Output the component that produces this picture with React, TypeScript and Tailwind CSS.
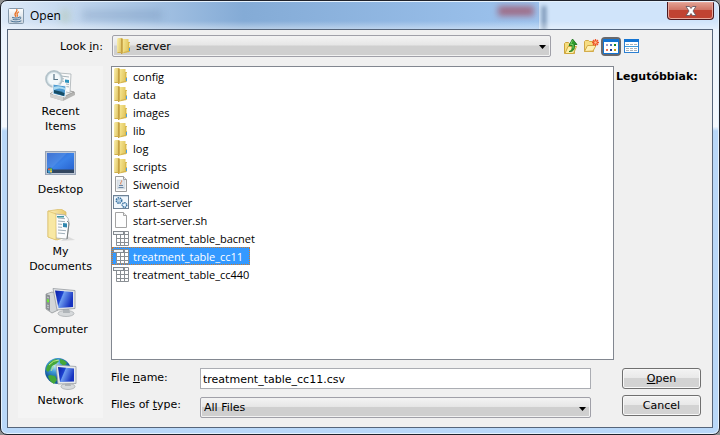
import React, { useState } from "react";

const uiFont = "font-['DejaVu_Sans',Verdana,sans-serif]";
const listFont = "font-['Open_Sans','Noto_Sans',sans-serif]";

function FolderIcon() {
  return (
    <svg width="16" height="16" viewBox="0 0 16 16" className="shrink-0" aria-hidden="true">
      <defs>
        <linearGradient id="fold-a" x2="1" y2=".3">
          <stop offset="0" stopColor="#faf0ae" />
          <stop offset="1" stopColor="#dfc463" />
        </linearGradient>
        <linearGradient id="fold-b" x2="1">
          <stop offset="0" stopColor="#bf9a3d" />
          <stop offset="1" stopColor="#e2c565" />
        </linearGradient>
        <linearGradient id="fold-c" x2="1" y2=".3">
          <stop offset="0" stopColor="#f5e591" />
          <stop offset="1" stopColor="#e3c860" />
        </linearGradient>
      </defs>
      <path d="M1 1l1-1h4v15H2l-1-1z" fill="url(#fold-a)" />
      <path d="M6 0l2 2v12l-2 2H5V1z" fill="url(#fold-b)" />
      <path d="M7 1h5.500v13L7 15.500z" fill="url(#fold-c)" />
      <path d="M12 4h2v9.500l-2 1z" fill="#d9b951" />
      <path d="M13.500 5v4" stroke="#f2e5a2" />
      <path d="M13.500 10v3" stroke="#4ba0e0" />
      <path d="M1.500 14.500h4M7.500 14.500l5-1" stroke="#cfae4b" />
    </svg>
  );
}

function JavaCup() {
  return (
    <g fill="none" strokeLinecap="round">
      <path d="M8.800 1.500c1.500 2.500-4 3.500-1 7M10.500 4c-2.500 1.500-1.500 2-1 4" stroke="#e8742a" strokeWidth="1.300" />
      <path d="M4.500 9.500c2 .8 5 .8 6.500 0M5 11.300c2 .7 4 .7 5.500 0M3 13c2.500 1.300 7.500 1.300 10 0M11.500 9c2-.5 2 1.800 0 2.300" stroke="#466f93" />
    </g>
  );
}

function JavaIcon() {
  return (
    <svg width="16" height="16" viewBox="0 0 16 16" className="shrink-0" aria-hidden="true">
      <defs>
        <linearGradient id="java-bg" x2="0" y2="1">
          <stop offset="0" stopColor="#fff" />
          <stop offset="1" stopColor="#c9d4de" />
        </linearGradient>
      </defs>
      <rect x=".5" y=".5" width="15" height="15" rx="1" fill="url(#java-bg)" stroke="#8599ab" />
      <JavaCup />
    </svg>
  );
}

function JarIcon() {
  return (
    <svg width="16" height="16" viewBox="0 0 16 16" className="shrink-0" aria-hidden="true">
      <path d="M2.500.5h8l3 3v12h-11z" fill="#fcfcfc" stroke="#9b9b9b" />
      <path d="M10.500.5v3h3" fill="#e8e8e8" stroke="#9b9b9b" />
      <rect x="4" y="4" width="8" height="9" fill="#dde3e9" stroke="#c3cbd2" strokeWidth=".5" />
      <path d="M8.500 4.500c1 1.500-2 2-.5 4" stroke="#e27a48" fill="none" />
      <path d="M6 9.500h4M5.500 11.500h5" stroke="#6886a5" />
    </svg>
  );
}

function BatchIcon() {
  return (
    <svg width="16" height="16" viewBox="0 0 16 16" className="shrink-0" aria-hidden="true">
      <rect x=".5" y="1.500" width="15" height="13" fill="#f1f7fc" stroke="#6e8296" />
      <path d="M1 2.500h14" stroke="#c8d8e6" />
      <circle cx="6" cy="6.500" r="2.700" fill="#cfe4f5" stroke="#39719f" strokeWidth="1.600" strokeDasharray="1.500 .7" />
      <circle cx="6" cy="6.500" r="1" fill="#fff" stroke="#5d8fb8" strokeWidth=".6" />
      <circle cx="11.500" cy="11" r="2.300" fill="#d9eaf8" stroke="#39719f" strokeWidth="1.400" strokeDasharray="1.300 .6" />
      <circle cx="11.500" cy="11" r=".8" fill="#fff" />
    </svg>
  );
}

function BlankIcon() {
  return (
    <svg width="16" height="16" viewBox="0 0 16 16" className="shrink-0" aria-hidden="true">
      <path d="M2.500.5h8l3 3v12h-11z" fill="#fdfdfd" stroke="#a3a3a3" />
      <path d="M10.500.5v3h3" fill="#ececec" stroke="#a3a3a3" />
    </svg>
  );
}

function SheetIcon() {
  return (
    <svg width="16" height="16" viewBox="0 0 16 16" className="shrink-0" aria-hidden="true">
      <path d="M3 1h12v14.500H3z" fill="#fff" />
      <path d="M3.500 5v10.500h12V1.500h-4M3.500 8.500h12M3.500 12.500h12M7.500 5v10.500M11.500 1v14.500M11 4.500h4.500" fill="none" stroke="#8a8f94" />
      <rect x=".5" y="1.500" width="10" height="3" fill="#f3f5f7" stroke="#83898f" />
    </svg>
  );
}

function UpFolderIcon() {
  return (
    <svg width="16" height="17" viewBox="0 0 16 17" aria-hidden="true">
      <path d="M1.500 15.500V5.500l1-1h3l1 1h5v10z" fill="#f6dd80" stroke="#cda43c" />
      <path d="M2 15.500l3-7h8.500l-3 7z" fill="#fdf0a8" stroke="#d1a93f" />
      <path d="M6 13.500c3-.5 3.300-3 3-6H6L9.500 1l4.500 5.500h-2.500c.5 5-1.500 7.500-5.500 7z" fill="#2e9a2e" stroke="#167016" strokeWidth=".8" />
      <path d="M9.500 2.500l-2 4h2.500v4" stroke="#75cc61" fill="none" />
    </svg>
  );
}

function NewFolderIcon() {
  return (
    <svg width="16" height="16" viewBox="0 0 16 16" aria-hidden="true">
      <path d="M1.500 13.500v-10l1-1h3l1 1h4v10z" fill="#f7dd82" stroke="#d0a745" />
      <path d="M1.500 13.500l3-6h8.500l-3 5.500z" fill="#fff1b4" stroke="#d3ab48" />
      <path d="M12.500 1v7M9 4.500h7M10 2l5 5M15 2l-5 5" stroke="#ef5327" strokeWidth="1.300" />
      <circle cx="12.500" cy="4.500" r="1.200" fill="#ffc38a" />
    </svg>
  );
}

function ListViewIcon() {
  return (
    <svg width="16" height="15" viewBox="0 0 16 15" aria-hidden="true">
      <rect x=".5" y=".5" width="15" height="14" fill="#fff" stroke="#1474d2" />
      <path d="M0 1.500h16" stroke="#1474d2" strokeWidth="3" />
      <path d="M3 5h2v2H3z" fill="#a79ccb" /><path d="M7 5h2v2H7z" fill="#4b72c4" /><path d="M11 5h2v2h-2z" fill="#118a22" />
      <path d="M3 10h2v2H3z" fill="#ed704f" /><path d="M7 10h2v2H7z" fill="#133794" /><path d="M11 10h2v2h-2z" fill="#c9a106" />
    </svg>
  );
}

function DetailsIcon() {
  return (
    <svg width="15" height="14" viewBox="0 0 15 14" aria-hidden="true">
      <rect x=".5" y=".5" width="14" height="13" fill="#fff" stroke="#2b7fd2" />
      <path d="M0 1.500h15" stroke="#1474d2" strokeWidth="3" />
      <path d="M2 5.500h11M2 9.500h11M2 11.500h11" stroke="#a9b2ba" strokeDasharray="3 1" />
      <path d="M1 7.500h13" stroke="#3d9bdc" />
    </svg>
  );
}

function RecentIcon() {
  return (
    <svg width="32" height="32" viewBox="0 0 32 32" aria-hidden="true">
      <path d="M5 25l8-7 17 5v3l-12 6-13-4z" fill="#b5b5b3" />
      <path d="M5 25l8-6 16 4-11 5z" fill="#eeeeec" stroke="#8e8e8c" strokeWidth=".7" />
      <path d="M5 25v3l13 4v-4z" fill="#d2d2d0" />
      <path d="M14 4l12 1-1 19-11-3z" fill="#fafafa" stroke="#a8b0b4" strokeWidth=".8" />
      <path d="M16 7l8 1M16 9.500l3 .4M16 12l3 .4M21 15l3 .4M21 17.500l3 .4" stroke="#a7b4ba" />
      <path d="M20 10.500l4 .5v3l-4-.5z" fill="#2d93bd" />
      <circle cx="9" cy="10" r="8" fill="#dce8ed" stroke="#b4c3ca" strokeWidth="1.800" />
      <circle cx="9" cy="10" r="6" fill="#f3f8fa" />
      <path d="M9 5v5.500h4" stroke="#587587" fill="none" strokeWidth="1.200" />
      <path d="M8 15l13 2-1 11-12-3z" fill="#4e9bd1" stroke="#f6f9fa" />
      <path d="M8.800 18q5-2 11.500 1v2q-6-3-11.500 0z" fill="#aadaf1" />
      <path d="M9 21q6 1 10.500 3l-.5 3-10-3z" fill="#164c65" />
    </svg>
  );
}

function DesktopIcon() {
  return (
    <svg width="32" height="32" viewBox="0 0 32 32" aria-hidden="true">
      <defs>
        <linearGradient id="desk" x2="1" y2="1">
          <stop offset="0" stopColor="#2c5dc5" />
          <stop offset=".5" stopColor="#3b82e8" />
          <stop offset="1" stopColor="#245dcb" />
        </linearGradient>
      </defs>
      <rect x=".5" y="4.500" width="30" height="23" fill="#bfc8d6" stroke="#98a4b6" />
      <rect x="2" y="6" width="27" height="20" fill="url(#desk)" />
      <path d="M2 6h20L6 22H2z" fill="#7eb2f3" opacity=".25" />
      <rect x="2" y="22.500" width="27" height="3.500" fill="#33465f" />
      <circle cx="5" cy="23.500" r="3" fill="#1c6493" />
      <path d="M3 21.500h2v2H3z" fill="#ed673f" /><path d="M5 21.500h2v2H5z" fill="#88c63e" />
      <path d="M3 23.500h2v2H3z" fill="#45a7e0" /><path d="M5 23.500h2v2H5z" fill="#f3c643" />
    </svg>
  );
}

function DocumentsIcon() {
  return (
    <svg width="32" height="32" viewBox="0 0 32 32" aria-hidden="true">
      <defs>
        <linearGradient id="docs" x2="1">
          <stop offset="0" stopColor="#fdf3c1" />
          <stop offset="1" stopColor="#e8c86d" />
        </linearGradient>
      </defs>
      <path d="M22 27l8 4-14 1z" fill="#ccc" opacity=".6" />
      <path d="M3 2l13-2 5 3v25l-9 3-9-3z" fill="url(#docs)" stroke="#d7b962" strokeWidth=".7" />
      <path d="M10 5l10 1q4 3 4 7l-2 17-11-1z" fill="#fbfcfd" stroke="#a2a9ac" strokeWidth=".8" />
      <path d="M13 9l7 .7M13 12l7 .7M13 15l4 .4M13 18l4 .4M13 21l8 .7M13 24l7 .7" stroke="#9fafb9" />
      <path d="M12 7h7v1.500h-7z" fill="#3d96a4" /><path d="M18 14l4 .5v4l-4-.5z" fill="#3187ae" />
      <path d="M3 2l8 3v26l-8-3z" fill="#f8e8a3" stroke="#dbbd66" strokeWidth=".7" />
      <path d="M22 12q2 1 2 3l-2 15" fill="none" stroke="#777d7e" />
    </svg>
  );
}

function MonitorDefs({ id }: { id: string }) {
  return (
    <defs>
      <linearGradient id={id} x2="1" y2=".4">
        <stop offset="0" stopColor="#0b1ca3" />
        <stop offset=".42" stopColor="#1d43d0" />
        <stop offset=".48" stopColor="#6d9cf0" />
        <stop offset="1" stopColor="#1733c0" />
      </linearGradient>
    </defs>
  );
}

function ComputerIcon() {
  return (
    <svg width="32" height="32" viewBox="0 0 32 32" aria-hidden="true">
      <MonitorDefs id="pc-screen" />
      <path d="M1 7l6-2 6 2v16l-6 3-6-4z" fill="#d3d6d8" stroke="#85898c" strokeWidth=".7" />
      <path d="M1 7l4 1.500V24l-4-2.500z" fill="#8a8f93" />
      <path d="M2 10l2 1M2 18l2 1M2 20l2 1" stroke="#c9ced2" />
      <path d="M2 12l2 .5v3L2 15z" fill="#6cec35" />
      <ellipse cx="21" cy="26.500" rx="8" ry="3" fill="#d6d9db" stroke="#a2a6a9" strokeWidth=".7" />
      <path d="M18 21h6l1 5h-7z" fill="#b0b5b9" />
      <path d="M8 1.500l22 2v18L12 23z" fill="#e1e4e7" stroke="#979ca1" strokeWidth=".8" />
      <path d="M10 3.500L28 5v15l-14.500 1z" fill="url(#pc-screen)" />
    </svg>
  );
}

function NetworkIcon() {
  return (
    <svg width="32" height="32" viewBox="0 0 32 32" aria-hidden="true">
      <defs>
        <radialGradient id="globe" cx=".4" cy=".3">
          <stop offset="0" stopColor="#c4edff" />
          <stop offset=".5" stopColor="#3f9ad6" />
          <stop offset="1" stopColor="#145a9d" />
        </radialGradient>
      </defs>
      <MonitorDefs id="net-screen" />
      <circle cx="13" cy="13" r="13" fill="url(#globe)" />
      <path d="M2 8Q6 2 11 1l3 2-3 3-4 2-2 4-2 2-2-2zM15 1q5 1 7 4l-3 3-4-3zM5 17l5 1 2 4-3 4q-5-3-6-8z" fill="#45a739" />
      <path d="M4 7q4-5 10-5M6 13l3-6" fill="none" stroke="#b8ea8c" />
      <ellipse cx="23" cy="28.500" rx="7" ry="3" fill="#d7dadc" stroke="#a2a6a9" strokeWidth=".7" />
      <path d="M20 24h5l1 4h-6z" fill="#b0b5b9" />
      <path d="M11 7l20 1.500v17L13 26z" fill="#e6e9eb" stroke="#999ea3" strokeWidth=".8" />
      <path d="M13 9l16 1.500v13L15 24z" fill="url(#net-screen)" />
    </svg>
  );
}

const files: { name: string; Icon: () => React.JSX.Element }[] = [
  { name: "config", Icon: FolderIcon },
  { name: "data", Icon: FolderIcon },
  { name: "images", Icon: FolderIcon },
  { name: "lib", Icon: FolderIcon },
  { name: "log", Icon: FolderIcon },
  { name: "scripts", Icon: FolderIcon },
  { name: "Siwenoid", Icon: JarIcon },
  { name: "start-server", Icon: BatchIcon },
  { name: "start-server.sh", Icon: BlankIcon },
  { name: "treatment_table_bacnet", Icon: SheetIcon },
  { name: "treatment_table_cc11", Icon: SheetIcon },
  { name: "treatment_table_cc440", Icon: SheetIcon },
];

const places = [
  { name: "Recent Items", Icon: RecentIcon },
  { name: "Desktop", Icon: DesktopIcon },
  { name: "My Documents", Icon: DocumentsIcon },
  { name: "Computer", Icon: ComputerIcon },
  { name: "Network", Icon: NetworkIcon },
];

function ComboBox({ id, value, icon }: { id: string; value: string; icon?: React.ReactNode }) {
  return (
    <div className="relative min-w-0 flex-1">
      <select
        id={id}
        className={`block w-full appearance-none rounded-xs border border-[#a0a0a8] bg-linear-to-b from-[#f4f4f4] from-0% via-[#e6e6e6] via-45% to-[#cfcfcf] to-50% pt-0.5 text-[11px] text-black shadow-[inset_0_0_0_1px_#f2f2f2] outline-none ${icon ? "h-[22px] pl-[23px]" : "h-[21px] pl-[3px]"}`}
      >
        <option>{value}</option>
      </select>
      {icon && <span className="pointer-events-none absolute top-[3px] left-1">{icon}</span>}
      <svg className="pointer-events-none absolute top-[10px] right-[5px]" width="7" height="4" viewBox="0 0 7 4" aria-hidden="true">
        <path d="M0 0h7L3.500 4z" fill="#000" />
      </svg>
    </div>
  );
}

function DialogButton({ children }: { children: React.ReactNode }) {
  return (
    <button
      type="button"
      className="h-[21px] w-full rounded-[3px] border border-[#707070] bg-linear-to-b from-[#f3f3f3] from-0% via-[#e9e9e9] via-45% to-[#d3d3d3] to-50% text-[11px] leading-4 shadow-[inset_0_0_0_1px_#f8f8f8]"
    >
      {children}
    </button>
  );
}

export default function App() {
  const [selected, setSelected] = useState("treatment_table_cc11");
  const [fileName, setFileName] = useState("treatment_table_cc11.csv");

  return (
    <div className="h-screen bg-[#8f9090]">
      <div
        className={`flex h-full flex-col overflow-hidden rounded-[7px] border border-[#1f222b] bg-linear-to-b from-[#e8f1fc] from-0% via-[#f5f9fe] via-29% to-[#b9d8f9] to-30% text-[11px] text-black shadow-[inset_0_0_0_1px_#e6f2fd] ${uiFont}`}
      >
        <header className="relative mx-px mt-px flex h-[27px] shrink-0 items-start justify-between overflow-hidden rounded-t-md bg-[#d0e4fa]">
          <div className="pointer-events-none absolute inset-0" aria-hidden="true">
            <div className="h-full w-3/4 bg-linear-to-r from-[#dce9f8] from-0% via-[#84abd6] via-45% to-[#9dc3ee] to-100%" />
            <div className="absolute top-2 left-20 h-2.5 w-20 bg-[#52749c]/25 blur-xs" />
            <div className="absolute top-2 left-15 h-3 w-1.5 bg-[#a7ba78]/50 blur-xs" />
            <div className="absolute top-1 left-[496px] h-2.5 w-9 bg-[#a0485c]/70 blur-[3px]" />
            <div className="absolute top-1 left-[540px] h-8 w-1 bg-[#42628a]/70 blur-[2px]" />
            <div className="absolute inset-x-0 bottom-0 h-2 bg-linear-to-b from-white/0 to-white/40" />
          </div>
          <div className="relative flex items-center gap-1.5 pt-[5px] pl-1.5">
            <JavaIcon />
            <h1 className={`pt-px text-[12px] leading-4 ${listFont}`}>Open</h1>
          </div>
          <button
            type="button"
            aria-label="Close"
            className="relative mr-1 flex h-[18px] w-[47px] items-center justify-center rounded-b-[4px] border border-t-0 border-[#4b1a20] bg-linear-to-b from-[#e2a395] from-0% via-[#cf7566] via-45% to-[#c04332] to-50% shadow-[inset_0_0_0_1px_#e8a89c]"
          >
            <svg width="12" height="10" viewBox="0 0 12 10" aria-hidden="true">
              <path d="M1 .5h3.500L6 2.500 7.500.5H11L8 5l3 4.500H7.500L6 7.500l-1.500 2H1L4 5z" fill="#fff" stroke="#6b5a62" strokeWidth=".9" />
            </svg>
          </button>
        </header>

        <main className="mx-1.5 mb-1.5 flex min-h-0 flex-1 flex-col gap-[9px] border border-[#56657a] bg-[#f0f0f0] pt-[5px] pr-[11px] pb-[9px] pl-2.5">
          <div className="flex h-[22px] shrink-0 items-center">
            <label htmlFor="look-in" className="w-[85px] shrink-0 pt-0.5 text-right leading-4">
              Look <u>i</u>n:
            </label>
            <div className="ml-[9px] flex flex-1">
              <ComboBox id="look-in" value="server" icon={<FolderIcon />} />
            </div>
            <div className="flex w-[150px] shrink-0 items-center pl-3">
              <button type="button" aria-label="Up one level"><UpFolderIcon /></button>
              <button type="button" aria-label="New folder" className="ml-1"><NewFolderIcon /></button>
              <button
                type="button"
                aria-label="List view"
                aria-pressed="true"
                className="ml-0.5 flex h-[19px] w-5 items-center justify-center rounded-[4px] border-2 border-[#68686c] bg-[#68686c]"
              >
                <ListViewIcon />
              </button>
              <button type="button" aria-label="Details view" className="ml-[3px]"><DetailsIcon /></button>
            </div>
          </div>

          <div className="flex min-h-0 flex-1 gap-2">
            <nav aria-label="Places" className="grid w-[85px] shrink-0 auto-rows-fr bg-[#f4f4f4]">
              {places.map(({ name, Icon }) => (
                <button key={name} type="button" className="flex flex-col items-center justify-center gap-[3px] px-2 leading-[15px]">
                  <Icon />
                  <span>{name}</span>
                </button>
              ))}
            </nav>

            <div className="flex min-w-0 flex-1 flex-col gap-2">
              <div className="flex min-h-0 flex-1 gap-0.5">
                <ul role="listbox" aria-label="Files" className={`min-w-0 flex-1 border border-[#828790] bg-white text-[11px] ${listFont}`}>
                  {files.map(({ name, Icon }) => (
                    <li
                      key={name}
                      role="option"
                      aria-selected={name === selected}
                      onClick={() => setSelected(name)}
                      className={`flex h-[18px] w-fit items-center gap-1 border border-dotted pr-1.5 leading-4 ${
                        name === selected ? "border-[#d07a2c] bg-[#3399ff] text-white" : "border-transparent"
                      }`}
                    >
                      <Icon />
                      <span className="pt-px">{name}</span>
                    </li>
                  ))}
                </ul>
                <h2 className="w-[85px] shrink-0 pt-[3px] leading-4 font-bold">Legutóbbiak:</h2>
              </div>

              <div className="flex shrink-0 items-start gap-[31px]">
                <div className="flex min-w-0 flex-1 flex-col gap-2">
                  <div className="flex">
                    <label htmlFor="file-name" className="w-[89px] shrink-0 pt-0.5 leading-4">
                      File <u>n</u>ame:
                    </label>
                    <input
                      id="file-name"
                      type="text"
                      value={fileName}
                      onChange={(e) => setFileName(e.target.value)}
                      className="h-[21px] min-w-0 flex-1 border border-[#abadb3] bg-white px-0.5 pt-0.5 outline-none"
                    />
                  </div>
                  <div className="flex">
                    <label htmlFor="file-type" className="w-[89px] shrink-0 leading-4">
                      Files of <u>t</u>ype:
                    </label>
                    <ComboBox id="file-type" value="All Files" />
                  </div>
                </div>
                <div className="flex w-[79px] shrink-0 flex-col gap-1.5">
                  <DialogButton><u>O</u>pen</DialogButton>
                  <DialogButton>Cancel</DialogButton>
                </div>
              </div>
            </div>
          </div>
        </main>
      </div>
    </div>
  );
}
